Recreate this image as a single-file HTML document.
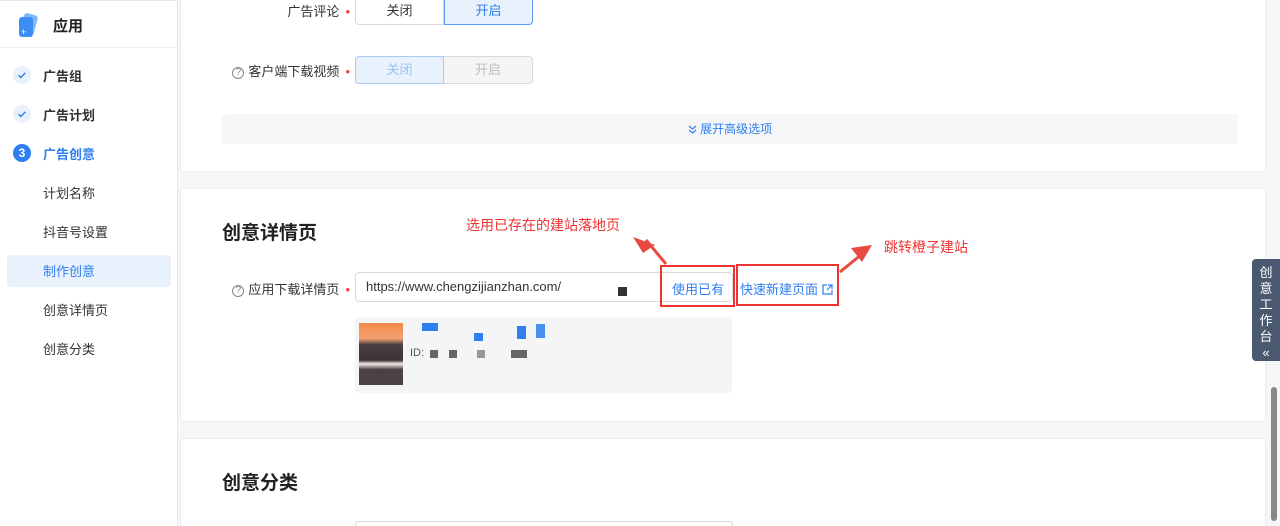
<!DOCTYPE html>
<html><head><meta charset="utf-8"><style>
*{margin:0;padding:0;box-sizing:border-box}
html,body{width:1280px;height:526px;overflow:hidden}
body{background:#f5f6f8;font-family:"Liberation Sans","Noto Sans CJK SC",sans-serif;font-size:13px;color:#333;position:relative}
.side{position:absolute;left:0;top:0;width:178px;height:526px;background:#fff;border-right:1px solid #e8e8e8}
.abs{position:absolute}
.card{position:absolute;left:180px;width:1086px;background:#fff;border:1px solid #ebedf0;border-radius:4px}
.lbl{position:absolute;text-align:right;font-size:13px;color:#333}
.dot{color:#f04040;margin-left:6px}
.seg{position:absolute;display:flex;height:28px}
.seg div{width:89px;height:28px;line-height:26px;text-align:center;border:1px solid #d9d9d9;font-size:13px}
.nav{position:absolute;left:43px;font-size:13px;color:#333}
.chk{position:absolute;left:13px;width:18px;height:18px;border-radius:50%;background:#e8f0fc}
.red{color:#ee3333;font-size:14px}
.box{position:absolute;border:2px solid #e33}
.q{color:#888;font-size:10px;border:1px solid #888;border-radius:50%;display:inline-block;width:12px;height:12px;line-height:10px;text-align:center;margin-right:4px;vertical-align:1px}
</style></head><body>
<div class="side">
  <div class="abs" style="left:0;top:0;width:178px;height:1px;background:#e8e8e8"></div>
  <svg class="abs" style="left:16px;top:12px" width="24" height="26"><rect x="6" y="2" width="14" height="20" rx="3" fill="#7fb6f7" transform="rotate(15 13 12)"/><rect x="3" y="5" width="14" height="20" rx="3" fill="#3d8ef2"/><text x="5" y="23" fill="#fff" font-size="9">+</text></svg>
  <div class="abs" style="left:53px;top:15px;font-size:15px;font-weight:bold;color:#222">应用</div>
  <div class="abs" style="left:0;top:47px;width:178px;height:1px;background:#eee"></div>
  <div class="chk" style="top:66px"><svg width="18" height="18"><path d="M5.5 9.2l2.4 2.3 4.4-4.6" stroke="#3b7fe8" stroke-width="1.5" fill="none"/></svg></div><div class="nav" style="top:66px;font-weight:bold">广告组</div>
  <div class="chk" style="top:105px"><svg width="18" height="18"><path d="M5.5 9.2l2.4 2.3 4.4-4.6" stroke="#3b7fe8" stroke-width="1.5" fill="none"/></svg></div><div class="nav" style="top:105px;font-weight:bold">广告计划</div>
  <div class="chk" style="top:144px;background:#2f7ff0;color:#fff;font-weight:bold;font-size:12px;text-align:center;line-height:18px">3</div><div class="nav" style="top:144px;font-weight:bold;color:#2f7ff0">广告创意</div>
  <div class="nav" style="top:183px">计划名称</div>
  <div class="nav" style="top:222px">抖音号设置</div>
  <div class="abs" style="left:7px;top:255px;width:164px;height:32px;background:#e9f1fd;border-radius:3px"></div>
  <div class="nav" style="top:261px;color:#2f7ff0">制作创意</div>
  <div class="nav" style="top:300px">创意详情页</div>
  <div class="nav" style="top:339px">创意分类</div>
</div>

<div class="card" style="top:-10px;height:182px"></div>
<div class="lbl" style="left:250px;top:1px;width:100px">广告评论<span class="dot">•</span></div>
<div class="seg" style="left:355px;top:-3px"><div style="border-radius:0 0 0 4px">关闭</div><div style="background:#e9f1fd;border-color:#5b9af5;color:#2f7ff0;border-radius:0 0 4px 0">开启</div></div>
<div class="lbl" style="left:220px;top:61px;width:130px"><span class="q">?</span>客户端下载视频<span class="dot">•</span></div>
<div class="seg" style="left:355px;top:56px"><div style="background:#e9f1fd;border-color:#a9c9f7;color:#9cc0f2;border-radius:4px 0 0 4px">关闭</div><div style="background:#f5f5f5;color:#bbb;border-left:none;border-radius:0 4px 4px 0">开启</div></div>
<div class="abs" style="left:222px;top:114px;width:1016px;height:30px;background:#f5f6f8;border-radius:3px;text-align:center;line-height:30px;color:#2f7ff0;font-size:12px"><svg width="9" height="9" style="vertical-align:-1px"><path d="M1 1l3.5 3 3.5-3M1 5l3.5 3 3.5-3" stroke="#2f7ff0" fill="none" stroke-width="1.2"/></svg> 展开高级选项</div>

<div class="card" style="top:188px;height:234px"></div>
<div class="abs" style="left:222px;top:218px;font-size:19px;font-weight:bold;color:#222">创意详情页</div>
<div class="lbl" style="left:220px;top:279px;width:130px"><span class="q">?</span>应用下载详情页<span class="dot">•</span></div>
<div class="abs" style="left:355px;top:272px;width:378px;height:30px;border:1px solid #d9d9d9;border-radius:4px;padding-left:10px;line-height:28px;font-size:13px">https://www.chengzijianzhan.com/</div>
<div class="abs" style="left:618px;top:287px;width:9px;height:9px;background:#333"></div>
<div class="abs" style="left:672px;top:279px;color:#2f7ff0">使用已有</div>
<div class="abs" style="left:740px;top:279px;color:#2f7ff0">快速新建页面 <svg width="11" height="11" style="vertical-align:-1px"><path d="M5 1H1v9h9V6M6 1h4v4M10 1L5 6" stroke="#2f7ff0" fill="none" stroke-width="1.2"/></svg></div>
<div class="box" style="left:660px;top:265px;width:75px;height:42px"></div>
<div class="box" style="left:736px;top:264px;width:103px;height:42px"></div>
<div class="abs" style="left:355px;top:317px;width:377px;height:76px;background:#f4f5f7;border-radius:3px"></div>
<div class="abs" style="left:359px;top:323px;width:44px;height:62px;background:linear-gradient(#f38a4a 0,#f3a070 25%,#4a3f44 35%,#3d3235 60%,#f2ece8 66%,#4a4242 75%)"></div>
<div class="abs" style="left:422px;top:323px;width:16px;height:8px;background:#2f7ff0"></div>
<div class="abs" style="left:474px;top:333px;width:9px;height:8px;background:#2f7ff0"></div>
<div class="abs" style="left:517px;top:326px;width:9px;height:13px;background:#2f7ff0"></div>
<div class="abs" style="left:536px;top:324px;width:9px;height:14px;background:#4b8ef2"></div>
<div class="abs" style="left:410px;top:347px;font-size:11px;color:#555">ID:</div>
<div class="abs" style="left:430px;top:350px;width:8px;height:8px;background:#666"></div>
<div class="abs" style="left:449px;top:350px;width:8px;height:8px;background:#666"></div>
<div class="abs" style="left:477px;top:350px;width:8px;height:8px;background:#999"></div>
<div class="abs" style="left:511px;top:350px;width:16px;height:8px;background:#666"></div>

<div class="abs red" style="left:466px;top:215px">选用已存在的建站落地页</div>
<div class="abs red" style="left:884px;top:237px">跳转橙子建站</div>
<svg class="abs" style="left:0;top:0" width="1280" height="526"><g stroke="#e84a3f" stroke-width="3" fill="#e84a3f"><line x1="646" y1="240" x2="666" y2="264"/><polygon points="633,237 655,245 643,253" stroke="none"/><line x1="840" y1="272" x2="862" y2="254"/><polygon points="872,245 851,248 862,262" stroke="none"/></g></svg>

<div class="card" style="top:438px;height:100px"></div>
<div class="abs" style="left:222px;top:468px;font-size:19px;font-weight:bold;color:#222">创意分类</div>
<div class="abs" style="left:355px;top:521px;width:378px;height:10px;border:1px solid #d9d9d9;border-radius:4px"></div>

<div class="abs" style="left:1252px;top:259px;width:28px;height:102px;background:#4a5970;border-radius:4px 0 0 4px;color:#fff;font-size:13px;text-align:center;line-height:16px;padding-top:6px">创<br>意<br>工<br>作<br>台<br>«</div>
<div class="abs" style="left:1271px;top:387px;width:6px;height:134px;background:#888;border-radius:3px"></div>
</body></html>
